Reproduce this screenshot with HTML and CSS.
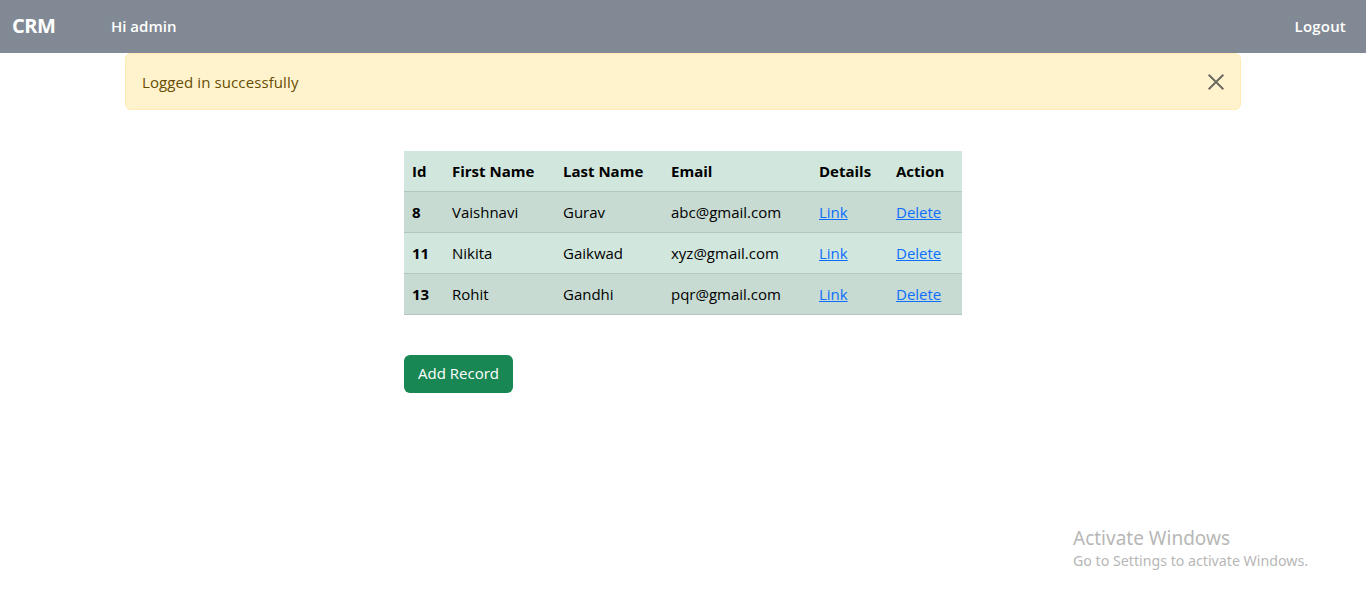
FILE: index.html
```html
<!DOCTYPE html>
<html>
<head>
<meta charset="utf-8">
<link rel="stylesheet" href="styles.css">
</head>
<body>
<nav class="navbar">
  <div class="nav-left">
    <span class="brand">CRM</span>
    <span class="greet">Hi admin</span>
  </div>
  <a class="logout" href="#">Logout</a>
</nav>
<div class="alert">
  <span>Logged in successfully</span>
  <button class="close" aria-label="Close">
    <svg width="18" height="18" viewBox="0 0 16 16"><path d="M1.5 1.5 L14.5 14.5 M14.5 1.5 L1.5 14.5" stroke="#6d6a62" stroke-width="1.8" fill="none"/></svg>
  </button>
</div>
<main class="content">
  <table class="records">
    <colgroup>
      <col class="c-id"><col class="c-first"><col class="c-last"><col class="c-email"><col class="c-details"><col class="c-action">
    </colgroup>
    <thead>
      <tr><th>Id</th><th>First Name</th><th>Last Name</th><th>Email</th><th>Details</th><th>Action</th></tr>
    </thead>
    <tbody>
      <tr class="odd"><th>8</th><td>Vaishnavi</td><td>Gurav</td><td>abc@gmail.com</td><td><a href="#">Link</a></td><td><a href="#">Delete</a></td></tr>
      <tr><th>11</th><td>Nikita</td><td>Gaikwad</td><td>xyz@gmail.com</td><td><a href="#">Link</a></td><td><a href="#">Delete</a></td></tr>
      <tr class="odd"><th>13</th><td>Rohit</td><td>Gandhi</td><td>pqr@gmail.com</td><td><a href="#">Link</a></td><td><a href="#">Delete</a></td></tr>
    </tbody>
  </table>
  <button class="btn-add">Add Record</button>
</main>
<div class="watermark">
  <div class="wm-title">Activate Windows</div>
  <div class="wm-sub">Go to Settings to activate Windows.</div>
</div>
</body>
</html>
```
FILE: styles.css
```css
* { box-sizing: border-box; }
html, body { margin: 0; padding: 0; }
body {
  font-family: "Open Sans", "Noto Sans", sans-serif;
  font-size: 16px;
  color: #212529;
  background: #fff;
  height: 595px;
  overflow: hidden;
}
.navbar {
  height: 53px;
  background: #818a94;
  display: flex;
  align-items: center;
  justify-content: space-between;
  padding: 0 20px 2px 12px;
  color: #fff;
}
.nav-left { display: flex; align-items: center; }
.brand { font-weight: 700; font-size: 20px; letter-spacing: -0.5px; width: 99px; }
.greet { font-weight: 600; font-size: 15px; }
.logout { color: #fff; text-decoration: none; font-weight: 600; font-size: 15px; letter-spacing: 0.2px; }
.alert {
  width: 1116px;
  margin: 0 auto;
  height: 57px;
  background: #fff3cd;
  border: 1px solid #ffecb5;
  border-radius: 6px;
  color: #664d03;
  display: flex;
  align-items: center;
  justify-content: space-between;
  padding: 0 12px 0 16px;
  font-size: 15px;
  letter-spacing: 0.1px;
}
.close { background: none; border: 0; padding: 0; width: 24px; height: 24px; display: flex; align-items: center; justify-content: center; }
.content {
  width: 558px;
  margin: 41px auto 0;
}
.records {
  width: 558px;
  border-collapse: collapse;
  table-layout: fixed;
  font-size: 15px;
  color: #000;
}
.c-id { width: 40px; } .c-first { width: 111px; } .c-last { width: 108px; }
.c-email { width: 148px; } .c-details { width: 77px; } .c-action { width: 74px; }
.records th, .records td {
  text-align: left;
  padding: 0 8px;
  height: 41px;
  border-bottom: 1px solid #b5c6bf;
  background: #d1e7dd;
  white-space: nowrap;
}
.records thead th { height: 40px; font-weight: 700; }
.records tbody th { font-weight: 700; }
.records tr.odd th, .records tr.odd td { background: #c7dbd2; }
.records a { color: #0d6efd; }
.btn-add {
  margin-top: 40px;
  background: #198754;
  color: #fff;
  border: 0;
  border-radius: 6px;
  height: 38px;
  width: 109px;
  font-family: inherit;
  font-size: 15px;
  padding: 0 0 1px;
}
.watermark {
  position: absolute;
  left: 1073px;
  top: 526px;
  color: #b7b7b7;
  font-family: "Noto Sans", sans-serif;
}
.wm-title { font-size: 19px; line-height: 24px; }
.wm-sub { font-size: 14.2px; line-height: 21px; }
```
